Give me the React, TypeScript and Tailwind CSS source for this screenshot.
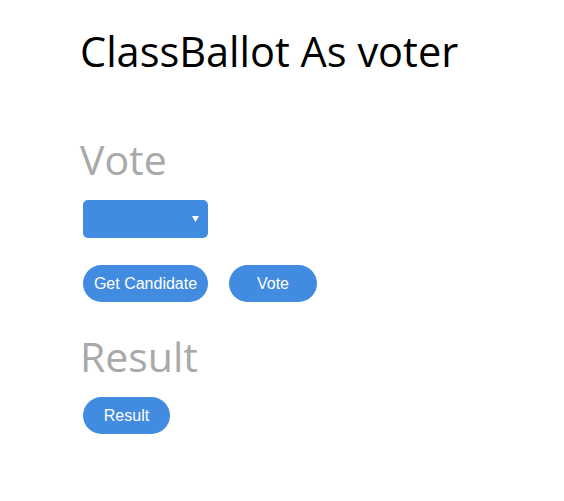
import React from "react";

export default function App() {
  const btn =
    "h-[37px] rounded-full bg-[#418be0] text-white text-[16px] font-['Liberation_Sans',Arial,sans-serif] flex items-center justify-center";
  return (
    <div className="min-h-[501px] bg-white pl-[80px] pt-[27px] flex flex-col items-start">
      <h1 className="text-[41.5px] leading-[48px] text-black font-['Open_Sans',sans-serif] font-normal">
        ClassBallot As voter
      </h1>
      <h2 className="mt-[60px] text-[41px] leading-[48px] text-[#a9a9a9] font-['Open_Sans',sans-serif] font-normal">
        Vote
      </h2>
      <div className="mt-[17px] ml-[3px] w-[125px] h-[38px] rounded-[5px] bg-[#418be0] flex items-center justify-end pr-[9px]">
        <svg width="7" height="6" viewBox="0 0 7 6">
          <path d="M0 0 H7 L3.5 6 Z" fill="white" />
        </svg>
      </div>
      <div className="mt-[27px] ml-[3px] flex gap-[21px]">
        <div className={`${btn} w-[125px]`}>Get Candidate</div>
        <div className={`${btn} w-[88px]`}>Vote</div>
      </div>
      <h2 className="mt-[30px] text-[41px] leading-[48px] text-[#a9a9a9] font-['Open_Sans',sans-serif] font-normal">
        Result
      </h2>
      <div className={`${btn} mt-[17px] ml-[3px] w-[87px]`}>Result</div>
    </div>
  );
}
